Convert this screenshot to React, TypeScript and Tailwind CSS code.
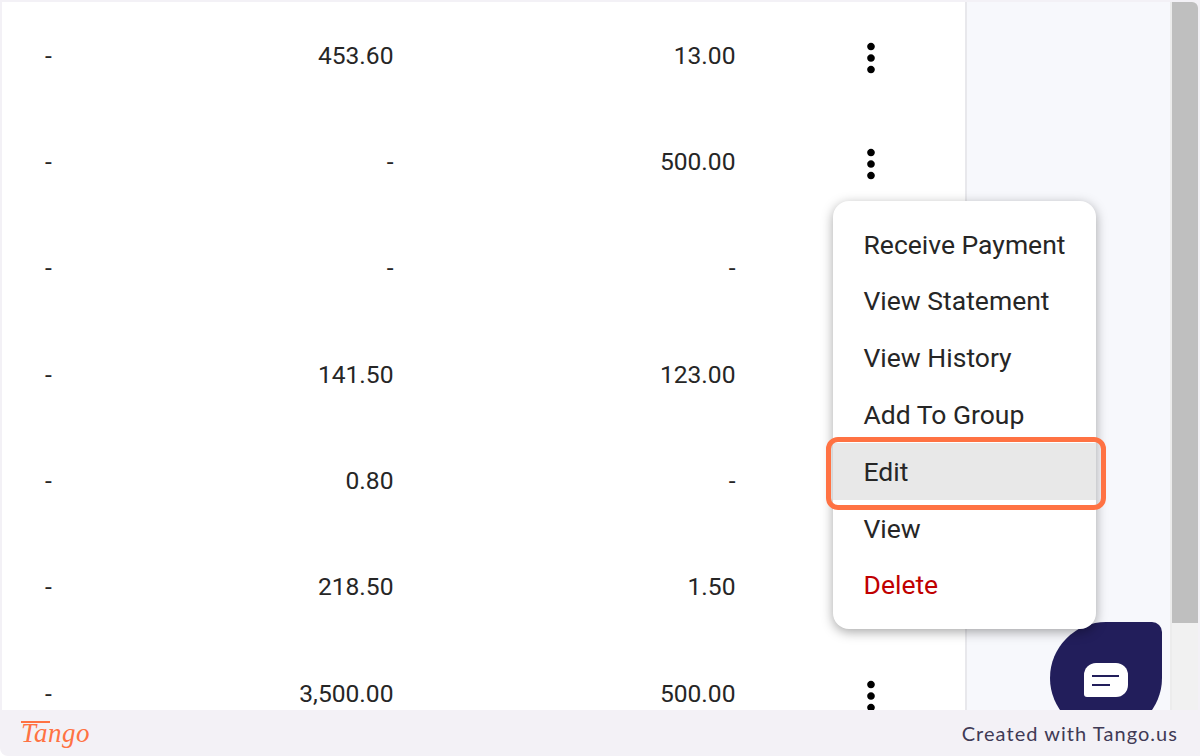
import { MdMoreVert } from "react-icons/md";

const rows = [
  { a: "-", b: "453.60", c: "13.00" },
  { a: "-", b: "-", c: "500.00" },
  { a: "-", b: "-", c: "-" },
  { a: "-", b: "141.50", c: "123.00" },
  { a: "-", b: "0.80", c: "-" },
  { a: "-", b: "218.50", c: "1.50" },
  { a: "-", b: "3,500.00", c: "500.00" },
];

const menuItems = ["Receive Payment", "View Statement", "View History", "Add To Group", "Edit", "View", "Delete"];

const Row = ({ a, b, c }: { a: string; b: string; c: string }) => (
  <div className="grid h-[106.33px] shrink-0 grid-cols-[200px_191.5px_342px_1fr] items-center text-[24.6px] text-[#262626]">
    <span className="pl-[43px]">{a}</span>
    <span className="text-right">{b}</span>
    <span className="text-right">{c}</span>
    <span className="mt-[4px] pl-[112.5px] text-black">
      <MdMoreVert size={46} />
    </span>
  </div>
);

const Menu = () => (
  <div className="absolute left-[833px] top-[201px] w-[263px] rounded-[16px] bg-white py-[15px] shadow-[0_3px_12px_rgba(0,0,0,0.35)]">
    {menuItems.map((item) => (
      <div
        key={item}
        className={`flex h-[56.8px] items-center pl-[30.5px] text-[26.5px] ${item === "Delete" ? "text-[#c00000]" : "text-[#262626]"} ${item === "Edit" ? "bg-[#e8e8e8]" : ""}`}
      >
        {item}
      </div>
    ))}
  </div>
);

export default function App() {
  return (
    <div className="relative flex h-[756px] w-[1200px] flex-col overflow-hidden bg-white font-['Roboto',sans-serif]">
      <div className="flex min-h-0 flex-1 bg-[#f3f1f6] px-[2px] pt-[2px]">
        {/* Table */}
        <div className="flex w-[965px] flex-col overflow-hidden border-r-2 border-[#e8e8ec] bg-white pt-[1px]">
          {rows.map((row, i) => (
            <Row key={i} {...row} />
          ))}
        </div>

        {/* Empty side */}
        <div className="flex-1 bg-[#f7f8fc]" />

        {/* Scrollbar */}
        <div className="w-[28px] rounded-tr-[6px] border-l-2 border-[#ececec] bg-[#f1f1f1]">
          <div className="h-[621px] rounded-tr-[6px] bg-[#bfbfbf]" />
        </div>
      </div>

      {/* Chat button */}
      <div className="absolute left-[1050px] top-[622px] flex h-[112px] w-[112px] items-center justify-center rounded-[56px] rounded-tr-[10px] bg-[#221e5b]">
        <div className="mt-[4px] flex h-[34px] w-[44px] flex-col justify-center gap-[7px] rounded-[12px] rounded-bl-[3px] bg-white pl-[8px]">
          <div className="h-[2px] w-[27px] bg-[#221e5b]" />
          <div className="h-[2px] w-[18px] bg-[#221e5b]" />
        </div>
      </div>

      <Menu />

      {/* Highlight */}
      <div className="absolute left-[826px] top-[437px] h-[73px] w-[280px] rounded-[12px] border-[5px] border-[#ff7243]" />

      {/* Footer */}
      <div className="relative flex h-[46px] shrink-0 items-center justify-between rounded-bl-[8px] bg-[#f3f1f6] pl-[21px] pr-[22px]">
        <span className="relative font-['Liberation_Serif',serif] text-[27px] italic leading-none tracking-[0.5px] text-[#ff7243]">
          <span className="absolute left-0 top-[1px] h-[2px] w-[29px] bg-[#ff7243]" />
          Tango
        </span>
        <span className="font-['Lato',sans-serif] text-[20px] tracking-[1.05px] text-[#3f3a55]">Created with Tango.us</span>
      </div>
    </div>
  );
}
